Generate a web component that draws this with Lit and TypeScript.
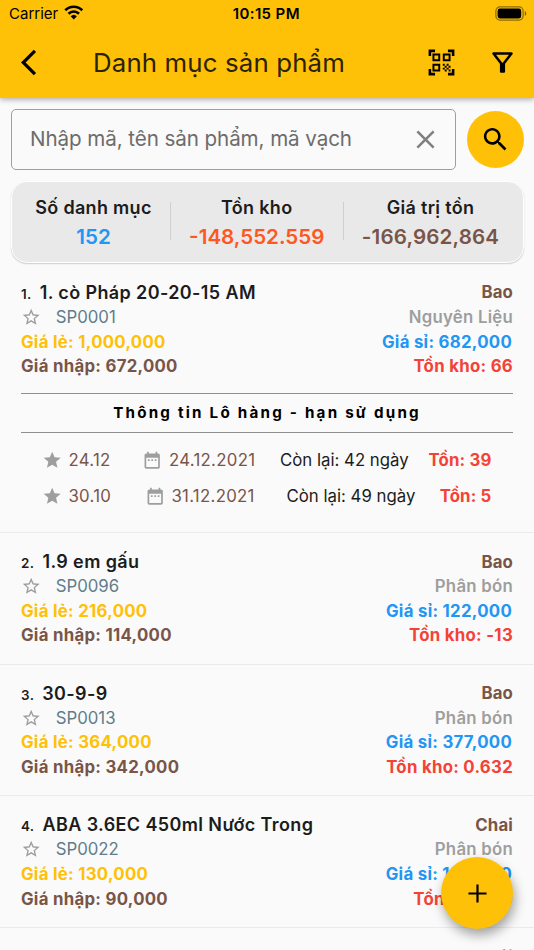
import { LitElement, html, css, svg } from "lit";
import { customElement, property } from "lit/decorators.js";

const ICONS: Record<string, string> = {
  back: "M11.67 3.87L9.9 2.1 0 12l9.9 9.9 1.77-1.77L3.54 12z",
  scan: "M9.5 6.5v3h-3v-3h3M11 5H5v6h6V5zM9.5 14.5v3h-3v-3h3M11 13H5v6h6v-6zM17.5 6.5v3h-3v-3h3M19 5h-6v6h6V5zM13 13h1.5v1.5H13V13zM14.5 14.5H16V16h-1.5v-1.5zM16 13h1.5v1.5H16V13zM13 16h1.5v1.5H13V16zM14.5 17.5H16V19h-1.5v-1.5zM16 16h1.5v1.5H16V16zM17.5 14.5H19V16h-1.5v-1.5zM17.5 17.5H19V19h-1.5v-1.5zM22 7h-2V4h-3V2h5v5zM22 22v-5h-2v3h-3v2h5zM2 22h5v-2H4v-3H2v5zM2 2v5h2V4h3V2H2z",
  filter: "M7 6h10l-5.01 6.3L7 6zm-2.75-.39C6.27 8.2 10 13 10 13v6c0 .55.45 1 1 1h2c.55 0 1-.45 1-1v-6s3.72-4.8 5.74-7.39A.998.998 0 0 0 18.95 4H5.04c-.83 0-1.3.95-.79 1.61z",
  close: "M19 6.41L17.59 5 12 10.59 6.41 5 5 6.41 10.59 12 5 17.59 6.41 19 12 13.41 17.59 19 19 17.59 13.41 12z",
  search: "M15.5 14h-.79l-.28-.27C15.41 12.59 16 11.11 16 9.5 16 5.91 13.09 3 9.5 3S3 5.91 3 9.5 5.91 16 9.5 16c1.61 0 3.09-.59 4.23-1.57l.27.28v.79l5 4.99L20.49 19l-4.99-5zm-6 0C7.01 14 5 11.99 5 9.5S7.01 5 9.5 5 14 7.01 14 9.5 11.99 14 9.5 14z",
  starLine: "M22 9.24l-7.19-.62L12 2 9.19 8.63 2 9.24l5.46 4.73L5.82 21 12 17.27 18.18 21l-1.63-7.03L22 9.24zM12 15.4l-3.76 2.27 1-4.28-3.32-2.88 4.38-.38L12 6.1l1.71 4.04 4.38.38-3.32 2.88 1 4.28L12 15.4z",
  star: "M12 17.27L18.18 21l-1.64-7.03L22 9.24l-7.19-.61L12 2 9.19 8.63 2 9.24l5.46 4.73L5.82 21z",
  calendar: "M9 11H7v2h2v-2zm4 0h-2v2h2v-2zm4 0h-2v2h2v-2zm2-7h-1V2h-2v2H8V2H6v2H5c-1.11 0-1.99.9-1.99 2L3 20c0 1.1.89 2 2 2h14c1.1 0 2-.9 2-2V6c0-1.1-.9-2-2-2zm0 16H5V9h14v11z",
  plus: "M19 12.85h-6.15V19h-1.7v-6.15H5v-1.7h6.15V5h1.7v6.15H19z",
};

const icon = (name: string) =>
  html`<svg class="icon ${name}" viewBox="0 0 24 24">${svg`<path fill="currentColor" fill-rule="evenodd" d=${ICONS[name]}></path>`}</svg>`;

interface Lot { code: string; date: string; left: string; stock: string; columns: string; }
interface Product {
  name: string; unit: string; code: string; group: string;
  retail: string; wholesale: string; cost: string; stock: string; lots?: Lot[];
}

const PRODUCTS: Product[] = [
  {
    name: "1. cò Pháp 20-20-15 AM", unit: "Bao", code: "SP0001", group: "Nguyên Liệu",
    retail: "1,000,000", wholesale: "682,000", cost: "672,000", stock: "66",
    lots: [
      { code: "24.12", date: "24.12.2021", left: "42", stock: "39", columns: "100.5px 138px 1fr auto" },
      { code: "30.10", date: "31.12.2021", left: "49", stock: "5", columns: "103px 142px 1fr auto" },
    ],
  },
  { name: "1.9 em gấu", unit: "Bao", code: "SP0096", group: "Phân bón", retail: "216,000", wholesale: "122,000", cost: "114,000", stock: "-13" },
  { name: "30-9-9", unit: "Bao", code: "SP0013", group: "Phân bón", retail: "364,000", wholesale: "377,000", cost: "342,000", stock: "0.632" },
  { name: "ABA 3.6EC 450ml Nước Trong", unit: "Chai", code: "SP0022", group: "Phân bón", retail: "130,000", wholesale: "120,000", cost: "90,000", stock: "20" },
];

@customElement("product-item")
export class ProductItem extends LitElement {
  @property({ attribute: false }) product!: Product;
  @property({ type: Number }) index = 1;

  static styles = css`
    :host { display: block; padding: 16px 21px 16.2px; border-bottom: 1px solid #ebebeb; box-sizing: border-box; }
    .line { display: flex; justify-content: space-between; align-items: center; height: 24.6px; font-size: 16.8px; font-weight: 700; letter-spacing: 0.28px; white-space: nowrap; }
    .title { font-size: 18px; font-weight: 600; color: #1c1c1c; display: flex; align-items: baseline; letter-spacing: 0.38px; }
    .num { font-size: 13.4px; margin-right: 8px; }
    .unit { color: #795548; letter-spacing: .15px; }
    .codes { display: flex; align-items: center; color: #607d8b; font-weight: 400; letter-spacing: 0; }
    .icon { width: 20.4px; height: 20.4px; color: #9e9e9e; flex: none; }
    .codes .icon { margin-right: 14.3px; }
    .group { color: #9e9e9e; font-weight: 600; letter-spacing: .25px; }
    .retail { color: #ffc107; }
    .wholesale { color: #2196f3; padding-right: 1px; }
    .cost { color: #795548; }
    .stock { color: #f44336; }
    .lots { margin-top: 14.4px; padding-bottom: 2px; }
    .heading { border-top: 1px solid #8f8f8f; border-bottom: 1px solid #8f8f8f; height: 38px; display: flex; align-items: center; justify-content: center; font-size: 15.2px; font-weight: 700; letter-spacing: 2.22px; color: #000; margin-bottom: 9.2px; }
    .lot { display: grid; align-items: center; height: 36px; padding: 0 21.5px 0 20.5px; font-size: 16.8px; white-space: nowrap; }
    .pair { display: flex; align-items: center; gap: 6.5px; color: #795548; letter-spacing: .3px; }
    .left { color: #1c1c1c; }
    .lot .stock { font-weight: 700; letter-spacing: .15px; }
  `;

  render() {
    const p = this.product;
    return html`
      <div class="line"><span class="title"><span class="num">${this.index}.</span><span>${p.name}</span></span><span class="unit">${p.unit}</span></div>
      ${p.code ? html`
      <div class="line"><span class="codes">${icon("starLine")}${p.code}</span><span class="group">${p.group}</span></div>
      <div class="line"><span class="retail">Giá lẻ: ${p.retail}</span><span class="wholesale">Giá sỉ: ${p.wholesale}</span></div>
      <div class="line"><span class="cost">Giá nhập: ${p.cost}</span><span class="stock">Tồn kho: ${p.stock}</span></div>` : null}
      ${p.lots ? html`<div class="lots">
        <div class="heading">Thông tin Lô hàng - hạn sử dụng</div>
        ${p.lots.map((l) => html`<div class="lot" style="grid-template-columns:${l.columns}">
          <span class="pair">${icon("star")}${l.code}</span>
          <span class="pair">${icon("calendar")}${l.date}</span>
          <span class="left">Còn lại: ${l.left} ngày</span>
          <span class="stock">Tồn: ${l.stock}</span>
        </div>`)}
      </div>` : null}
    `;
  }
}

const NEXT: Product = { name: "Ba có", unit: "Gói", code: "", group: "", retail: "", wholesale: "", cost: "", stock: "" };

@customElement("app-root")
export class AppRoot extends LitElement {
  static styles = css`
    :host { display: flex; flex-direction: column; position: relative; height: 950px; overflow: hidden; background: #fafafa; font-family: Inter, "Noto Sans", sans-serif; color: #1c1c1c; }
    product-item { flex: none; }
    product-item.next { padding-top: 16.9px; }
    .top { background: #ffc107; height: 98px; flex: none; box-shadow: 0 2px 5px rgba(0,0,0,.28); color: #000; }
    .status { height: 27px; display: grid; grid-template-columns: 1fr auto 1fr; align-items: center; padding: 0 7px 0 9px; font-size: 15px; box-sizing: border-box; }
    .carrier { display: flex; align-items: center; gap: 6px; }
    .wifi { width: 19.5px; height: 14.5px; margin-top: -2px; }
    .time { font-weight: 600; letter-spacing: .38px; margin-left: -3.4px; }
    .battery { justify-self: end; width: 32px; height: 15px; }
    .bar { height: 70px; display: flex; align-items: center; padding: 0 15.5px 0 21px; }
    .icon { display: block; width: 31px; height: 31px; flex: none; }
    .heading { font-size: 25.8px; flex: 1; margin-left: 41px; letter-spacing: .15px; color: #2b2105; white-space: nowrap; }
    .scan { margin-right: 30.6px; }
    .filter { margin-right: .3px; }
    .finder { display: flex; align-items: center; justify-content: space-between; padding: 10.8px 10.5px 0 10.6px; }
    .field { width: 445.5px; height: 61.5px; border: 1.3px solid #9e9e9e; border-radius: 5px; box-sizing: border-box; display: flex; align-items: center; justify-content: space-between; padding: 0 14px 1px 18.4px; font-size: 20.6px; letter-spacing: -.08px; color: #6c6c6c; white-space: nowrap; }
    .field span { padding-bottom: 1px; }
    .close { color: #808080; }
    .go { width: 57px; height: 57px; border-radius: 50%; background: #ffc107; color: #000; display: flex; align-items: center; justify-content: center; }
    .summary { margin: 11.1px 10.5px 0.8px 11px; height: 82px; flex: none; box-sizing: border-box; border: 1.3px solid #fff; border-radius: 16px; background: #e9e9e9; box-shadow: 0 1px 1.5px rgba(0,0,0,.18); display: grid; grid-template-columns: 158px 172.5px 1fr; }
    .cell { display: flex; flex-direction: column; align-items: center; justify-content: center; font-weight: 600; position: relative; padding: 0 0 1px 5px; }
    .cell + .cell { padding-left: 1px; }
    .cell + .cell + .cell { padding-left: 0; padding-right: 4px; }
    .cell + .cell::before { content: ""; position: absolute; left: 0; top: 20px; height: 38px; width: 1.3px; background: #cfcfcf; }
    .label { font-size: 18px; line-height: 29px; color: #1c1c1c; letter-spacing: .3px; }
    .value { font-size: 20.6px; line-height: 29px; }
    .blue { color: #2196f3; } .orange { color: #ff5722; } .brown { color: #795548; letter-spacing: .14px; }
    .fab { position: absolute; right: 21px; bottom: 21px; width: 72px; height: 72px; border-radius: 50%; background: #ffc107; color: #000; display: flex; align-items: center; justify-content: center; box-shadow: 2px 6px 12px rgba(0,0,0,.36); }
  `;

  render() {
    return html`
      <header class="top">
        <div class="status">
          <span class="carrier">Carrier
            <svg class="wifi" viewBox="0 0 20 15"><g fill="none" stroke="#000" stroke-width="2.7"><path d="M1.2 5.4a12.5 12.5 0 0 1 17.6 0"></path><path d="M4.6 9a7.7 7.7 0 0 1 10.8 0"></path></g><path d="M10 15l-3.2-3.3a4.6 4.6 0 0 1 6.4 0z"></path></svg>
          </span>
          <span class="time">10:15 PM</span>
          <svg class="battery" viewBox="0 0 32 15"><rect x=".9" y=".9" width="27.2" height="13.2" rx="4" fill="none" stroke="#000" stroke-opacity=".45" stroke-width="1.2"></rect><rect x="2.6" y="2.6" width="23.6" height="9.8" rx="2.3"></rect><path d="M29.8 5c2 1 2 4 0 5z" opacity=".5"></path></svg>
        </div>
        <div class="bar">${icon("back")}<span class="heading">Danh mục sản phẩm</span>${icon("scan")}${icon("filter")}</div>
      </header>
      <div class="finder">
        <div class="field"><span>Nhập mã, tên sản phẩm, mã vạch</span>${icon("close")}</div>
        <div class="go">${icon("search")}</div>
      </div>
      <div class="summary">
        <div class="cell"><span class="label">Số danh mục</span><span class="value blue">152</span></div>
        <div class="cell"><span class="label">Tồn kho</span><span class="value orange">-148,552.559</span></div>
        <div class="cell"><span class="label">Giá trị tồn</span><span class="value brown">-166,962,864</span></div>
      </div>
      ${PRODUCTS.map((p, i) => html`<product-item .product=${p} .index=${i + 1}></product-item>`)}
      <product-item class="next" .product=${NEXT} .index=${PRODUCTS.length + 1}></product-item>
      <div class="fab">${icon("plus")}</div>
    `;
  }
}
